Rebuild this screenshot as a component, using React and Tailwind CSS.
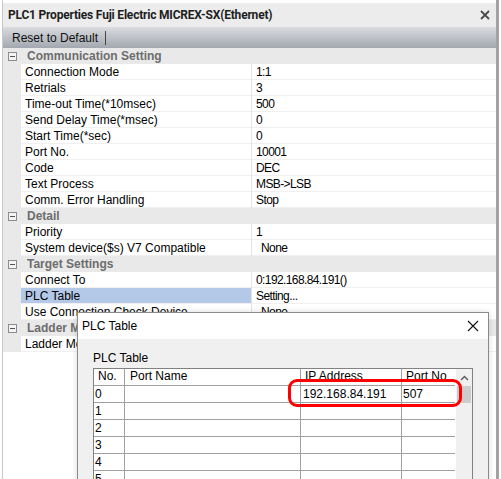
import React from "react";

const rows = [
  { cat: "Communication Setting" },
  { label: "Connection Mode", value: "1:1" },
  { label: "Retrials", value: "3" },
  { label: "Time-out Time(*10msec)", value: "500" },
  { label: "Send Delay Time(*msec)", value: "0" },
  { label: "Start Time(*sec)", value: "0" },
  { label: "Port No.", value: "10001" },
  { label: "Code", value: "DEC" },
  { label: "Text Process", value: "MSB->LSB" },
  { label: "Comm. Error Handling", value: "Stop" },
  { cat: "Detail" },
  { label: "Priority", value: "1" },
  { label: "System device($s) V7 Compatible", value: "None", indent: true },
  { cat: "Target Settings" },
  { label: "Connect To", value: "0:192.168.84.191()" },
  { label: "PLC Table", value: "Setting...", selected: true },
  { label: "Use Connection Check Device", value: "None", indent: true },
  { cat: "Ladder Monitor" },
  { label: "Ladder Monitor Mode", value: "" },
];

const tableRows = [
  { no: "0", name: "", ip: "192.168.84.191", port: "507" },
  { no: "1" },
  { no: "2" },
  { no: "3" },
  { no: "4" },
  { no: "5" },
];

const Collapse = () => (
  <span className="flex h-[9px] w-[9px] items-center justify-center border border-[#8c8c8c] bg-[#f4f4f4]">
    <span className="h-px w-[5px] bg-[#555]" />
  </span>
);

const PropRow = ({ row }) => {
  if (row.cat) {
    return (
      <div className="flex h-[16px] items-center bg-[#e9e9e9]">
        <div className="flex w-[18px] justify-center">
          <Collapse />
        </div>
        <span className="pl-[6px] text-[12px] font-bold leading-none text-[#6d6d6d]">
          {row.cat}
        </span>
      </div>
    );
  }
  return (
    <div className="flex h-[16px]">
      <div className="w-[18px] bg-[#e9e9e9]" />
      <div
        className={`flex w-[230px] items-center border-b border-[#f0f0f0] pl-[4px] ${
          row.selected ? "bg-[#b4c9e8]" : "bg-white"
        }`}
      >
        <span className="whitespace-nowrap text-[12px] leading-none text-black">{row.label}</span>
      </div>
      <div className="w-px bg-[#e4e4e4]" />
      <div
        className={`flex flex-1 items-center border-b border-[#f0f0f0] bg-white ${
          row.indent ? "pl-[9px]" : "pl-[4px]"
        }`}
      >
        <span className="whitespace-nowrap text-[12px] leading-none tracking-[-0.6px] text-black">
          {row.value}
        </span>
      </div>
    </div>
  );
};

const PlcTableDialog = () => (
  <div className="absolute left-[77px] top-[312px] h-[190px] w-[412px] border border-[#8a8a8a] bg-[#f0f0f0] shadow-[0_0_6px_rgba(0,0,0,0.15)]">
    <div className="flex h-[26px] items-center justify-between bg-white pl-[4px] pr-[9px]">
      <span className="text-[12px] text-black">PLC Table</span>
      <svg width="12" height="12" viewBox="0 0 12 12">
        <path d="M1 1 L11 11 M11 1 L1 11" stroke="#111" strokeWidth="1.1" fill="none" />
      </svg>
    </div>
    <div className="px-[15px] pt-[13px]">
      <div className="text-[12px] leading-none text-black">PLC Table</div>
      <div className="mt-[4px] flex w-[380px] border border-[#828282] bg-white">
        <div className="w-[361px]">
          <div className="flex h-[17px] items-end border-b border-[#a0a0a0] text-[12px] leading-[14px] text-black">
            <div className="h-full w-[31px] border-r border-[#a0a0a0] pl-[4px]">No.</div>
            <div className="h-full w-[176px] border-r border-[#a0a0a0] pl-[5px]">Port Name</div>
            <div className="h-full w-[101px] border-r border-[#a0a0a0] pl-[4px]">IP Address</div>
            <div className="h-full w-[53px] pl-[4px]">Port No</div>
          </div>
          {tableRows.map((r) => (
            <div
              key={r.no}
              className="flex h-[17px] border-b border-[#a0a0a0] text-[12px] leading-[16px] text-black"
            >
              <div className="w-[31px] border-r border-[#a0a0a0] pl-[1px]">{r.no}</div>
              <div className="w-[176px] border-r border-[#a0a0a0] pl-[2px]">{r.name}</div>
              <div className="w-[101px] border-r border-[#a0a0a0] pl-[2px]">{r.ip}</div>
              <div className="w-[53px] pl-[1px]">{r.port}</div>
            </div>
          ))}
        </div>
        <div className="ml-px flex-1 bg-[#f0f0f0]">
          <div className="flex h-[17px] items-center justify-center">
            <svg width="9" height="6" viewBox="0 0 9 6">
              <path d="M1 5 L4.5 1.5 L8 5" stroke="#606060" strokeWidth="1.5" fill="none" />
            </svg>
          </div>
          <div className="ml-[1px] h-[17px] w-[14px] bg-[#cdcdcd]" />
        </div>
      </div>
    </div>
  </div>
);

export default function App() {
  return (
    <div className="relative h-[479px] w-[501px] overflow-hidden bg-white font-['Liberation_Sans',Arial,sans-serif]">
      <div className="ml-[2px] flex h-full w-[497px] flex-col border-l border-r-[3px] border-l-[#c8c8c8] border-r-[#a2a2a2] pt-[3px]">
        <div className="flex h-[24px] items-center justify-between bg-[#ececec] pl-[5px] pr-[6px]">
          <span className="font-['Roboto',sans-serif] text-[12px] font-bold tracking-[-0.2px] text-[#1e1e1e]">
            PLC1 Properties Fuji Electric MICREX-SX(Ethernet)
          </span>
          <svg width="10" height="10" viewBox="0 0 10 10">
            <path d="M1 1 L9 9 M9 1 L1 9" stroke="#4a4a4a" strokeWidth="1.8" fill="none" />
          </svg>
        </div>
        <div className="flex h-[21px] items-center bg-gradient-to-b from-[#d9dcdf] to-[#a3a8b0] pl-[9px]">
          <span className="text-[12px] text-[#111]">Reset to Default</span>
          <span className="ml-[7px] h-[14px] w-px bg-[#444]" />
        </div>
        <div className="flex flex-col">
          {rows.map((r, i) => (
            <PropRow key={i} row={r} />
          ))}
        </div>
        <div className="flex-1 bg-white" />
      </div>
      <PlcTableDialog />
      <div className="absolute left-[288px] top-[379px] h-[28px] w-[174px] rounded-[9px] border-[3px] border-[#ff0000]" />
    </div>
  );
}
